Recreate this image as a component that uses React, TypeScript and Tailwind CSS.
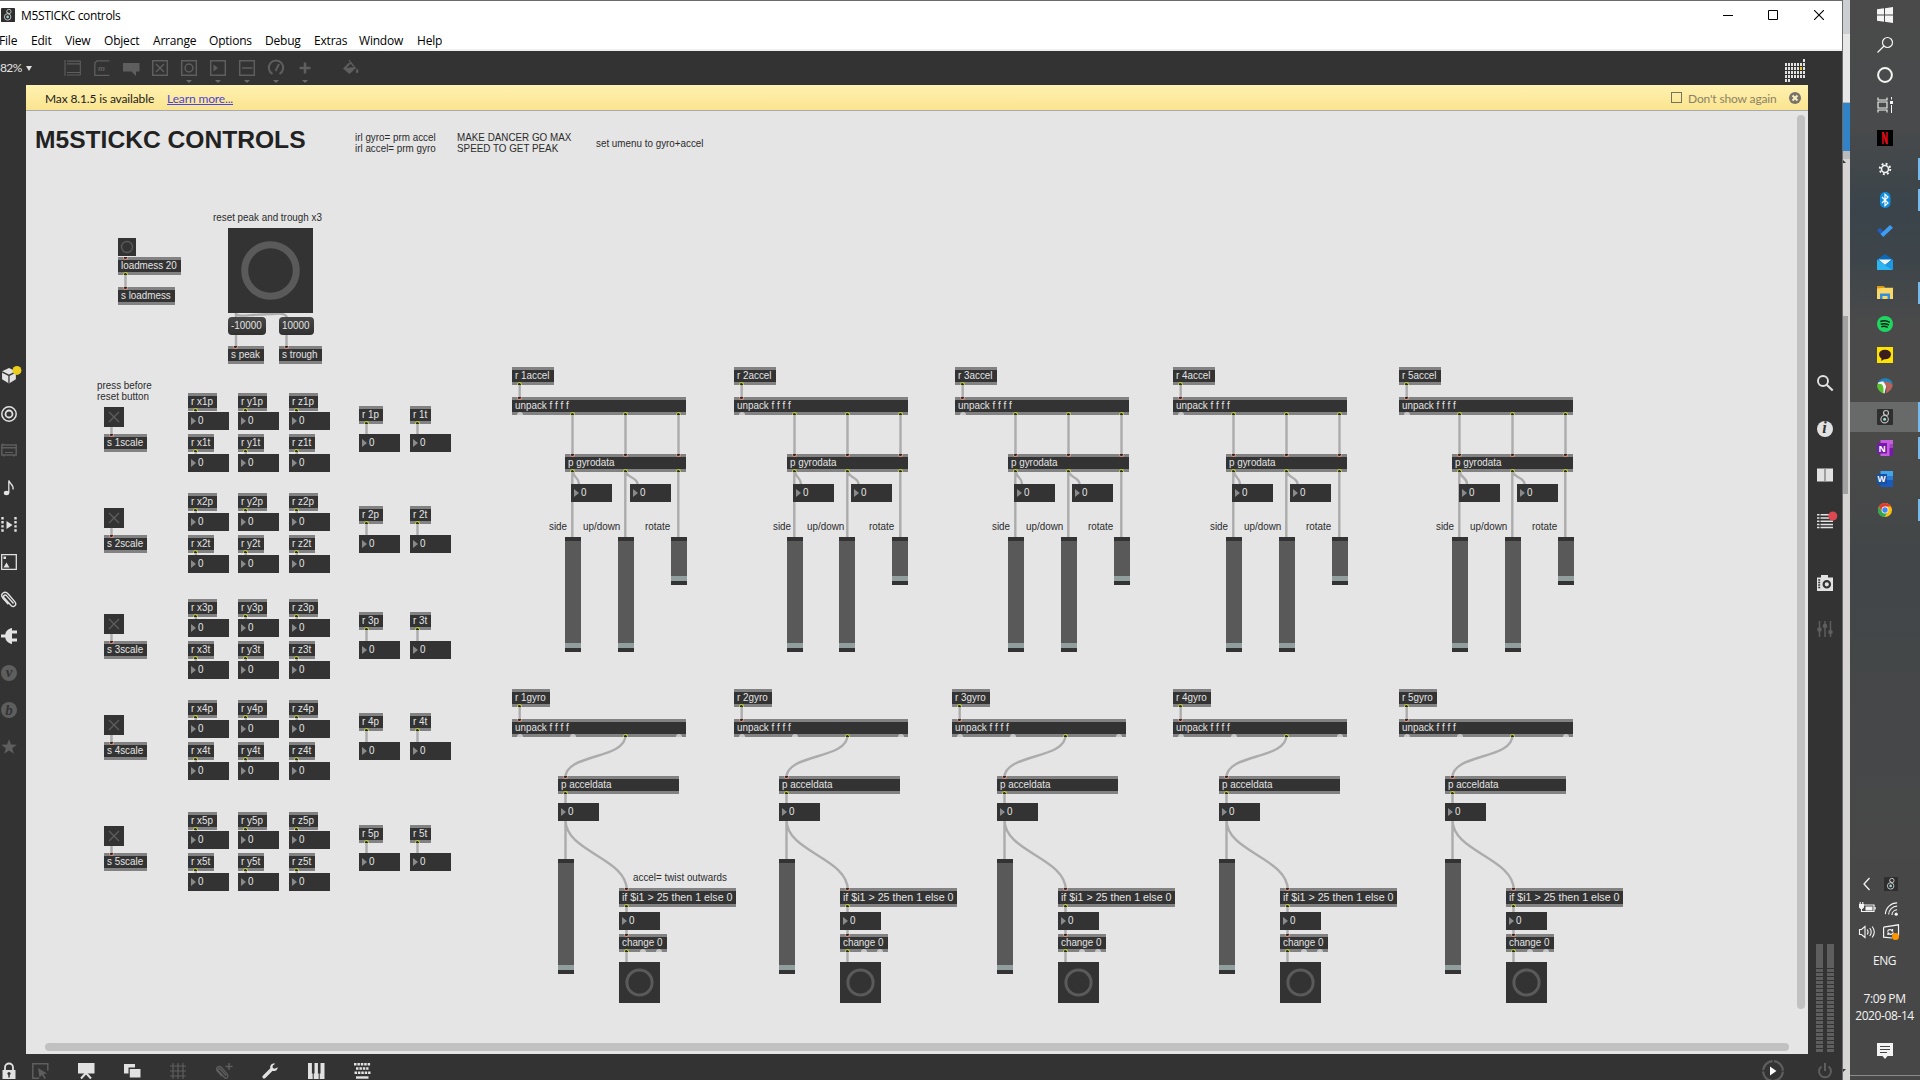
import React from "react";

/* ---------- patcher objects ---------- */

type P = { x: number; y: number };

function Node({ x, y, w, h, className = "", children }: P & { w?: number; h?: number; className?: string; children?: React.ReactNode }) {
  return (
    <div className={"absolute whitespace-nowrap " + className} style={{ left: x, top: y, width: w, height: h }}>
      {children}
    </div>
  );
}

function Inlet({ at }: { at: number }) {
  return <i className="absolute top-0 h-[3px] w-[5px] rounded-b-full border border-t-0 border-[#dd9483] bg-[#2a2a2a]" style={{ left: at - 2.5 }} />;
}

function Outlet({ at, on = true }: { at: number; on?: boolean }) {
  return on ? (
    <i className="absolute bottom-0 h-[3px] w-[5px] rounded-t-full border border-b-0 border-[#bccb3c] bg-[#2a2a2a]" style={{ left: at - 2.5 }} />
  ) : (
    <i className="absolute bottom-0 h-[3px] w-[6px] rounded-t-full bg-[#c8c8c8]" style={{ left: at - 3 }} />
  );
}

function Obj({ x, y, w, t, h = 18, big = false, ins = [], outs = [], off = [] }: P & { w: number; t: string; h?: number; big?: boolean; ins?: number[]; outs?: number[]; off?: number[] }) {
  return (
    <Node x={x} y={y} w={w} h={h} className="border-y-[3px] border-[#828282] bg-[#333333] text-[#e4e4e4]">
      <span className={"absolute left-[3px] origin-left leading-[13px] " + (big ? "top-0 scale-x-[0.969]" : "top-[-1px] scale-x-[0.895]")}>{t}</span>
      <span className="absolute inset-x-0 -top-[3px] -bottom-[3px]">
        {ins.map((a) => <Inlet key={a} at={a} />)}
        {outs.map((a) => <Outlet key={a} at={a} />)}
        {off.map((a) => <Outlet key={"o" + a} at={a} on={false} />)}
      </span>
    </Node>
  );
}

function Num({ x, y }: P) {
  return (
    <Node x={x} y={y} w={41} h={18} className="flex items-center bg-[#333333] pl-[3px] text-[#e4e4e4]">
      <i className="h-0 w-0 border-y-[4.5px] border-l-[5px] border-y-transparent border-l-[#8a8a8a]" />
      <span className="ml-[1.5px] -mt-px origin-left scale-x-[0.895] leading-[13px]">0</span>
    </Node>
  );
}

function Toggle({ x, y }: P) {
  return (
    <Node x={x} y={y} w={20} h={20} className="bg-[#333333]">
      <svg viewBox="0 0 20 20" className="h-5 w-5"><path d="M5 5l10 10M15 5L5 15" stroke="#5e5e5e" strokeWidth="1.3" /></svg>
    </Node>
  );
}

function Bang({ x, y, s, r, k }: P & { s: number; r: number; k: number }) {
  return (
    <Node x={x} y={y} w={s} h={s} className="bg-[#333333]">
      <svg width={s} height={s}><circle cx={s / 2} cy={s / 2} r={r} fill="none" stroke="#5a5a5a" strokeWidth={k} /></svg>
    </Node>
  );
}

function Slider({ x, y, h }: P & { h: number }) {
  return (
    <Node x={x} y={y} w={16} h={h} className="flex flex-col justify-end border-y-4 border-[#333333] bg-[#595959]">
      <div className="h-[5px] bg-[#919e9e]" />
    </Node>
  );
}

function Msg({ x, y, w, t }: P & { w: number; t: string }) {
  return (
    <Node x={x} y={y} w={w} h={18} className="rounded-[4px] bg-linear-to-b from-[#484848] to-[#303030] pl-[3px] leading-[17px] text-[#e4e4e4]">
      <span className="block origin-left scale-x-[0.895]">{t}</span>
    </Node>
  );
}

function Note({ x, y, children }: P & { children: React.ReactNode }) {
  return <Node x={x} y={y} className="origin-left scale-x-[0.895] leading-[11px] text-[#2b2b2b]">{children}</Node>;
}

/* ---------- patch data ---------- */

const scales = [
  { n: 1, tog: 407, p: 393, pn: 412, t: 434, tn: 454, r: 406 },
  { n: 2, tog: 508, p: 493, pn: 513, t: 535, tn: 555, r: 506 },
  { n: 3, tog: 614, p: 599, pn: 619, t: 641, tn: 661, r: 612 },
  { n: 4, tog: 715, p: 700, pn: 720, t: 742, tn: 762, r: 713 },
  { n: 5, tog: 826, p: 812, pn: 831, t: 853, tn: 873, r: 825 },
];
const axes = [{ a: "x", x: 188 }, { a: "y", x: 238 }, { a: "z", x: 289 }];

const accels = [
  { n: 1, x: 512, n1: 571, n2: 630, s: [565, 618, 671], l: 0 },
  { n: 2, x: 734, n1: 793, n2: 851, s: [787, 839, 892], l: 2 },
  { n: 3, x: 955, n1: 1014, n2: 1072, s: [1008, 1061, 1114], l: 0 },
  { n: 4, x: 1173, n1: 1232, n2: 1290, s: [1226, 1279, 1332], l: 0 },
  { n: 5, x: 1399, n1: 1459, n2: 1517, s: [1452, 1505, 1558], l: 0 },
];
const gyros = [
  { n: 1, x: 512, p: 558, f: 619 },
  { n: 2, x: 734, p: 779, f: 840 },
  { n: 3, x: 952, p: 997, f: 1058 },
  { n: 4, x: 1173, p: 1219, f: 1280 },
  { n: 5, x: 1399, p: 1445, f: 1506 },
];

const v = (x: number, a: number, b: number) => `M${x} ${a}V${b}`;
const curve = (x1: number, y1: number, x2: number, y2: number, k: number) =>
  `M${x1} ${y1}C${x1} ${y1 + k} ${x2} ${y2 - k} ${x2} ${y2}`;

const cords: string[] = [
  v(125.5, 273, 289), v(236, 312, 348), v(286.5, 334, 348),
  "M236 313C236 318 250 314.5 262 314.5S286 311 287 318",
  ...scales.flatMap((s) => [
    v(111.5, s.tog + 20, s.t + 2), v(366.5, s.r + 16, s.t), v(417.5, s.r + 16, s.t),
    ...axes.flatMap((a) => [v(a.x + 7.8, s.p + 16, s.pn), v(a.x + 7.8, s.t + 16, s.tn)]),
  ]),
  ...accels.flatMap((c) => [
    v(c.x + 7.7, 383, 399), v(c.x + 60.5, 413, 456), v(c.x + 113.5, 413, 456), v(c.x + 166.5, 413, 456),
    v(c.x + 60.3, 470, 538), v(c.x + 113.3, 470, 538), v(c.x + 166.3, 470, 538),
    curve(c.x + 61, 471, c.n1 + 8, 484, 7), curve(c.x + 114, 471, c.n2 + 7.5, 484, 7),
  ]),
  ...gyros.flatMap((c) => [
    v(c.x + 7.7, 705, 721), curve(c.x + 113.5, 735, c.p + 7.3, 778, 25), v(c.p + 7.5, 792, 860),
    curve(c.p + 7.5, 820, c.f + 7.8, 890, 32),
    v(c.f + 7.5, 905, 936), v(c.f + 7.5, 950, 962),
  ]),
];

function Patch() {
  return (
    <div className="absolute -left-[26px] -top-[111px] h-[1080px] w-[1842px] font-['Liberation_Sans',Arial,sans-serif] text-[11px]">
      <svg className="absolute inset-0" width="1842" height="1080">
        <path d={cords.join("")} fill="none" stroke="#acacac" strokeWidth="2.4" />
      </svg>

      <Node x={35} y={126} className="text-[24.6px] font-bold leading-[28px] text-[#222222]">M5STICKC CONTROLS</Node>
      <Note x={355} y={132}>irl gyro= prm accel<br />irl accel= prm gyro</Note>
      <Note x={457} y={132}>MAKE DANCER GO MAX<br />SPEED TO GET PEAK</Note>
      <Note x={596} y={138}>set umenu to gyro+accel</Note>
      <Note x={213} y={212}>reset peak and trough x3</Note>
      <Note x={97} y={380}>press before<br />reset button</Note>
      <Note x={633} y={872}>accel= twist outwards</Note>

      <Bang x={118} y={238} s={18} r={5.5} k={1.4} />
      <Obj x={118} y={257} w={63} t="loadmess 20" ins={[7.8]} outs={[7.8]} />
      <Obj x={118} y={287} w={57} t="s loadmess" ins={[7.8]} />
      <Bang x={228} y={228} s={85} r={25.8} k={7} />
      <Msg x={228} y={317} w={38} t="-10000" />
      <Msg x={279} y={317} w={35} t="10000" />
      <Obj x={228} y={346} w={36} t="s peak" ins={[7.8]} />
      <Obj x={279} y={346} w={43} t="s trough" ins={[7.8]} />

      {scales.map((s) => (
        <React.Fragment key={s.n}>
          <Toggle x={104} y={s.tog} />
          <Obj x={104} y={s.t} w={43} t={`s ${s.n}scale`} ins={[7.8]} />
          {axes.map((a) => (
            <React.Fragment key={a.a}>
              <Obj x={a.x} y={s.p} w={29} t={`r ${a.a}${s.n}p`} outs={[7.8]} />
              <Num x={a.x} y={s.pn} />
              <Obj x={a.x} y={s.t} w={26} t={`r ${a.a}${s.n}t`} outs={[7.8]} />
              <Num x={a.x} y={s.tn} />
            </React.Fragment>
          ))}
          <Obj x={359} y={s.r} w={24} t={`r ${s.n}p`} outs={[7.8]} />
          <Num x={359} y={s.t} />
          <Obj x={410} y={s.r} w={21} t={`r ${s.n}t`} outs={[7.8]} />
          <Num x={410} y={s.t} />
        </React.Fragment>
      ))}

      {accels.map((c) => (
        <React.Fragment key={c.n}>
          <Obj x={c.x} y={367} w={42} t={`r ${c.n}accel`} outs={[7.8]} />
          <Obj x={c.x} y={397} w={174} t="unpack f f f f" ins={[7.8]} outs={[60.6, 113.5, 166.5]} off={[8]} />
          <Obj x={c.x + 53} y={454} w={121} t="p gyrodata" ins={[7.8, 60.5, 113.5]} outs={[7.8, 60.5, 113.5]} />
          <Num x={c.n1} y={484} />
          <Num x={c.n2} y={484} />
          <Note x={c.x + 37 + c.l} y={521}>side</Note>
          <Note x={c.x + 71 + c.l} y={521}>up/down</Note>
          <Note x={c.x + 133 + c.l} y={521}>rotate</Note>
          <Slider x={c.s[0]} y={537} h={115} />
          <Slider x={c.s[1]} y={537} h={115} />
          <Slider x={c.s[2]} y={537} h={48} />
        </React.Fragment>
      ))}

      {gyros.map((c) => (
        <React.Fragment key={c.n}>
          <Obj x={c.x} y={689} w={38} t={`r ${c.n}gyro`} outs={[7.8]} />
          <Obj x={c.x} y={719} w={174} t="unpack f f f f" ins={[7.8]} outs={[113.5]} off={[8, 61, 166.5]} />
          <Obj x={c.p} y={776} w={121} t="p acceldata" ins={[7.8]} outs={[7.8]} />
          <Num x={c.p} y={803} />
          <Slider x={c.p} y={859} h={115} />
          <Obj x={c.f} y={888} w={117} h={19} big t="if $i1 > 25 then 1 else 0" ins={[7.8]} outs={[7.8]} />
          <Num x={c.f} y={912} />
          <Obj x={c.f} y={934} w={48} t="change 0" ins={[7.8]} outs={[7.8]} off={[24, 40]} />
          <Bang x={c.f} y={962} s={41} r={12.6} k={3} />
        </React.Fragment>
      ))}
    </div>
  );
}

/* ---------- icons ---------- */

function Ico({ children, s = 16, c = "#e2e2e2", className = "" }: { children: React.ReactNode; s?: number; c?: string; className?: string }) {
  return (
    <svg viewBox="0 0 16 16" width={s} height={s} fill="none" stroke={c} strokeWidth="1.5" className={"shrink-0 overflow-visible " + className}>
      {children}
    </svg>
  );
}

const LIT = "#e2e2e2";
const DIM = "#5e5e5e";
const CLIP = "M12.5 12.5L5.5 4.6C4 3 1.6 4.8 3.1 6.7l7.2 8c2.4 2.2 5.8-.8 3.8-3.6L7 2.7C3.8-.7-1.2 2.8 1.6 6.7l5.7 6.5";

function MaxLogo({ s = 16 }: { s?: number }) {
  return (
    <Ico s={s} c="#c4c4c4">
      <rect width="16" height="16" rx="1" fill="#2e2e2e" stroke="none" />
      <circle cx="7.6" cy="10.2" r="3.7" strokeWidth="1.1" />
      <circle cx="9" cy="4" r="2.5" strokeWidth="1.1" />
      <path d="M6.5 4.3L9.8 7" strokeWidth="1" />
      <circle cx="7.6" cy="10.2" r="1.5" fill="#9fd6d6" stroke="none" />
    </Ico>
  );
}

const leftIcons = [
  <Ico key="cube" s={17} c="none">
    <path d="M7.5 0l6.500 3v7.500l-6.500 4-6.500-4V3z" fill={LIT} />
    <path d="M1 3.600L7.500 7 14 3.600M7.500 7v7.500" stroke="#333" strokeWidth="1.200" />
    <circle cx="15" cy="2.300" r="4.200" fill="#ebce1c" />
  </Ico>,
  <Ico key="target"><circle cx="8" cy="8" r="7.200" /><circle cx="8" cy="8" r="3.500" strokeWidth="1.800" /></Ico>,
  <Ico key="box" c={DIM}><path d="M.8 2h14.400v10H.8zM.8 4.800h14.400M3 12v1.500M13 12v1.500M2 .5v1.500" /><path d="M4 9.500h8" strokeWidth="1" /></Ico>,
  <Ico key="note" c={LIT}><ellipse cx="5.500" cy="13" rx="2.700" ry="2.200" fill={LIT} stroke="none" /><path d="M7.800 13V.5C8.500 4 13 4.500 12 9.500" strokeWidth="1.300" /></Ico>,
  <Ico key="film" c={LIT}><path d="M1.500 0v16M14.500 0v16" strokeWidth="2.400" strokeDasharray="2.400 1.700" /><path d="M5.500 4v8l6-4z" fill={LIT} stroke="none" /></Ico>,
  <Ico key="image"><path d="M.7.700h14.600v14.600H.7z" strokeWidth="1.300" /><path d="M2.500 13.500L5.500 8.500l3 5zM2.500 2.500h2.500v2.500h-2.500z" fill={LIT} stroke="none" /></Ico>,
  <Ico key="clip"><path d={CLIP} strokeWidth="1.400" /></Ico>,
  <Ico key="plug" c="none"><path d="M11 0v16C8 15.500 5 13.500 4.200 9.500H0v-3h4.200C5 2.500 8 .5 11 0zM10 2.500h6v3h-6zM10 10.500h6v3h-6z" fill={LIT} /></Ico>,
  <span key="v" className="grid h-4 w-4 place-items-center rounded-full bg-[#5e5e5e] pb-px font-['Liberation_Serif',serif] text-[15px] font-bold italic leading-[14px] text-[#333]">v</span>,
  <span key="b" className="grid h-4 w-4 place-items-center rounded-full bg-[#5e5e5e] font-['Liberation_Serif',serif] text-[15px] font-bold italic leading-[14px] text-[#333]">b</span>,
  <Ico key="star" c="none"><path d="M8 .3l2 5.300 5.700.2-4.500 3.500 1.600 5.500L8 11.600l-4.800 3.200 1.600-5.500L.3 5.800 6 5.600z" fill={DIM} /></Ico>,
];

const frame = <path d="M.7.700h14.600v14.600H.7z" />;
const toolIcons: { i: React.ReactNode; menu?: boolean }[] = [
  { i: <Ico c={DIM}><path d="M0 0v16M15.300 1v14" strokeWidth="1.100" /><path d="M2 1.200h13.500M2 3.800h13.500M2 12.500h13.500M2 15h13.500" strokeWidth="1.200" /></Ico> },
  { i: <Ico c={DIM}><path d="M15.500.8H3L.8 3v12.300h14.700" strokeWidth="1.300" /><text x="4" y="11" fontSize="9" fontStyle="italic" fontWeight="bold" fontFamily="Liberation Serif" fill={DIM} stroke="none">m</text></Ico> },
  { i: <Ico c="none"><path d="M0 3h16.500v8.500H13V16l-4.500-4.500H0z" fill={DIM} /></Ico> },
  { i: <Ico c={DIM}>{frame}<path d="M4 4l8 8M12 4l-8 8" /></Ico> },
  { i: <Ico c={DIM}>{frame}<circle cx="8" cy="8" r="3.900" /></Ico>, menu: true },
  { i: <Ico c={DIM}>{frame}<path d="M3.500 4.500v7L8 8z" fill={DIM} stroke="none" /></Ico>, menu: true },
  { i: <Ico c={DIM}>{frame}<path d="M3 8h10.500" /></Ico>, menu: true },
  { i: <Ico c={DIM}><path d="M4.500 14a7.200 7.200 0 1 1 7 0" strokeWidth="2" /><path d="M7.500 11l3.500-7" strokeWidth="2" /></Ico>, menu: true },
  { i: <Ico c={DIM}><path d="M8 2.500v11M2.500 8h11" strokeWidth="2.600" /></Ico>, menu: true },
];

function GridMark() {
  const cells: [number, number][] = [[6, 0]];
  for (let r = 1; r <= 4; r++) for (let c = 0; c < 7; c++) cells.push([c, r]);
  cells.push([0, 5], [1, 5]);
  return (
    <svg width="21" height="23" className="mr-[36px] mt-[5px]">
      {cells.map(([c, r]) => (
        <rect key={c + "-" + r} x={c * 3} y={r * 4} width="2" height="3" fill={c === 5 && r === 2 ? "#e8c81c" : LIT} />
      ))}
    </svg>
  );
}

const bottomIcons = [
  <Ico key="lock" c={LIT}><path d="M4 8V4.500a4 4 0 0 1 8 0V8" strokeWidth="1.800" /><path d="M1.500 7h13v9h-13z" fill={LIT} stroke="none" /><circle cx="8" cy="10.500" r="1.600" fill="#333" stroke="none" /><path d="M8 11v3.500" stroke="#333" /></Ico>,
  <Ico key="sel" c={DIM}><path d="M7 15.300H.8V.8h15v7" strokeWidth="1.500" /><path d="M6 5l9 5.500-3.500.8L14 15l-1.500 1-2.500-4-2.500 2.500z" fill={DIM} stroke="none" /></Ico>,
  <Ico key="pres" c={LIT}><path d="M0 0h16.500v10.500H0z" fill={LIT} stroke="none" /><path d="M8 10l-5 5.500M8 10l5 5.500" strokeWidth="2" /></Ico>,
  <Ico key="win" c="none"><path d="M0 1h11v3.500H4.500v6H0z" fill={LIT} /><path d="M5.800 6h10.700v8.500H5.800z" fill={LIT} /></Ico>,
  <Ico key="grid" c={DIM}><path d="M3 0v16M8 0v16M13 0v16M0 3h16M0 8h16M0 13h16" strokeWidth="1.200" /></Ico>,
  <Ico key="clip" c={DIM}><g transform="translate(0 2.500) scale(.82)"><path d={CLIP} strokeWidth="1.600" /></g><path d="M13 0v7M9.500 3.500h7" strokeWidth="1.400" /></Ico>,
  <Ico key="wrench" c="none"><path d="M15.500 4.300l-2.700 1.500-2-.9-.2-2.100L13.200.8C10.500-.5 7.500 2 8.300 5.300L.8 12.700c-1.300 2 .8 3.600 2.300 2.500l7.300-7.300c3 .9 5.600-1.200 5.100-3.600z" fill={LIT} /></Ico>,
  <Ico key="piano" c="none"><path d="M0 0h16.500v16H0z" fill={LIT} /><path d="M5.200 0v10.500M11.200 0v10.500" stroke="#333" strokeWidth="2.600" /><path d="M5.200 10v6M11.200 10v6" stroke="#333" strokeWidth="1" /></Ico>,
  <Ico key="keys" c={LIT}><path d="M0 1.200h16.500M.5 9.800h16" strokeWidth="2.400" strokeDasharray="2.500 .9" /><path d="M2 5.500h12.500" strokeWidth="2.400" strokeDasharray="2.500 .9" /><path d="M2 14.500h12.500" strokeWidth="2.400" /></Ico>,
];

const rightIcons: { y: number; i: React.ReactNode }[] = [
  { y: 46, i: <Ico className="mt-px"><circle cx="6" cy="6" r="5" strokeWidth="1.900" /><path d="M9.700 9.700l6 5.800" strokeWidth="2.200" /></Ico> },
  { y: 46, i: <span className="mt-px grid h-4 w-4 place-items-center rounded-full bg-[#e2e2e2] pb-px font-['Liberation_Serif',serif] text-[16px] font-bold italic leading-[14px] text-[#333]">i</span> },
  { y: 46, i: <Ico c="none" className="mt-px"><path d="M0 1.500h16v13H0z" fill={LIT} /><path d="M8 1.500v13" stroke="#8a8a8a" strokeWidth="1.500" /></Ico> },
  { y: 46, i: <Ico c={LIT} className="mt-px"><path d="M0 1.800h2.500M3.500 1.800h9M0 5h2.500M3.500 5H12M0 8.200h2.500M3.500 8.200H16M0 11.400h2.500M3.500 11.400H16M0 14.600h2.500M3.500 14.600H16" strokeWidth="1.500" /><circle cx="15.800" cy="3" r="4.500" fill="#df4850" stroke="none" /></Ico> },
];

/* ---------- Windows taskbar ---------- */

const W = "#f4f4f4";
const startIcons = [
  <Ico key="w" c="none"><path d="M0 2.300l7-1V7.500H0zM8 1.200L16 0v7.500H8zM0 8.500h7v6.200l-7-1zM8 8.500h8V16l-8-1.200z" fill={W} /></Ico>,
  <Ico key="s" c={W}><circle cx="10.500" cy="5.500" r="5" strokeWidth="1.200" /><path d="M7 9L.5 15.500" strokeWidth="1.300" /></Ico>,
  <Ico key="c" c={W}><circle cx="8" cy="8" r="6.900" strokeWidth="2" /></Ico>,
  <Ico key="t" c={W}><path d="M1 .5v2.500h9V.5M1 15.500V13h9v2.500M1 5h9v6H1z" strokeWidth="1.100" /><path d="M14.500 0v2.500M14.500 8v8" strokeWidth="1" /><path d="M13 4h3v3h-3z" fill={W} stroke="none" /></Ico>,
];

const apps: { k: string; i: React.ReactNode; run?: boolean; active?: boolean }[] = [
  { k: "netflix", i: <Ico c="none"><path d="M0 0h16v16H0z" fill="#000" /><path d="M5 2h2v12l-2 .3zM9 2h2v12.300L9 14z" fill="#b00710" /><path d="M5 2h2l4 12.300L9 14z" fill="#e50914" /></Ico> },
  { k: "settings", run: true, i: <Ico c={W} s={14}><circle cx="8" cy="8" r="4" strokeWidth="1.800" /><circle cx="8" cy="8" r="6" strokeWidth="2.200" strokeDasharray="2.200 2.512" /></Ico> },
  { k: "bluetooth", run: true, i: <Ico c="none"><rect x="3" width="10.500" height="16" rx="5" fill="#0f8ee0" /><path d="M5 5l6 6-3 2.700V2.300L11 5l-6 6" stroke="#fff" strokeWidth="1.200" /></Ico> },
  { k: "todo", i: <Ico c="none"><path d="M2.800 4.800L0 7.600l6 6L8.800 10.800z" fill="#1f5fbf" /><path d="M13 2L16 4.800 6.300 14 3.500 11z" fill="#3f9cf0" /></Ico> },
  { k: "mail", i: <Ico c="none"><path d="M0 5.500L8 0l8 5.500V16H0z" fill="#0a68b4" /><path d="M1.500 5.500h13L8 11z" fill="#eef6fb" /><path d="M0 5.500L16 16H0z" fill="#2cb5f0" /><path d="M16 5.500V16L8 10.800z" fill="#1c98e4" /></Ico> },
  { k: "explorer", run: true, i: <Ico c="none"><path d="M0 1h6.500l1.500 1.500V6H0z" fill="#e09a12" /><path d="M0 3.500l8-.8h8V14H0z" fill="#fbd766" /><path d="M3 14V8.500h10V14h-2.500v-3h-5v3z" fill="#2f8fdd" /></Ico> },
  { k: "spotify", i: <Ico c="#10201a"><circle cx="8" cy="8" r="8" fill="#1ed760" stroke="none" /><path d="M3.300 5.500c3-1 6.700-.7 9.500.9M3.700 8.200c2.500-.8 5.700-.5 8.200.8M4.200 10.700c2-.6 4.500-.4 6.500.7" strokeWidth="1.500" /></Ico> },
  { k: "talk", i: <Ico c="none"><path d="M0 0h16v16H0z" fill="#ffe300" /><ellipse cx="8" cy="7.500" rx="6" ry="4.800" fill="#3a1d1d" /><path d="M4.500 10.500L4.300 14l4-2.500z" fill="#3a1d1d" /></Ico> },
  { k: "swirl", i: <Ico c="none"><path d="M1 4.500C3-.5 13-2 15.800 5.500L8 8z" fill="#1d84bd" /><path d="M.6 5C5 2.500 9 3 9.500 7L7.500 15.500 6 15z" fill="#f4f6f4" /><path d="M.3 6.200C5 4.500 7.300 7.500 6.300 15.500 2 13.500-.6 10 .3 6.200z" fill="#5bbf2f" /><path d="M6.500 4c3.500-1 7.500.2 9.200 2.700-.2 3.800-3.200 7-7 8.600C10 11 9.500 7 6.500 4z" fill="#b5655c" /></Ico> },
  { k: "max", run: true, active: true, i: <MaxLogo /> },
  { k: "onenote", run: true, i: <Ico c="none"><path d="M3.500 0H16v16H3.500z" fill="#c55fe0" /><path d="M12.500 4H16v4h-3.500z" fill="#a440c8" /><path d="M12.500 8H16v8h-3.500z" fill="#7719aa" /><path d="M0 3h10v10.500H0z" fill="#7719aa" /><text x="1.600" y="11.600" fontSize="9" fontWeight="bold" fontFamily="Open Sans" fill="#fff">N</text></Ico> },
  { k: "word", i: <Ico c="none"><path d="M3.500 0H16v5H3.500z" fill="#41a5ee" /><path d="M3.500 5H16v4H3.500z" fill="#2b7cd3" /><path d="M3.500 9H16v7H3.500z" fill="#185abd" /><path d="M0 3h10v10.500H0z" fill="#1650a8" /><text x=".6" y="11.300" fontSize="8.500" fontWeight="bold" fontFamily="Open Sans" fill="#fff">W</text></Ico> },
  { k: "chrome", run: true, i: <Ico c="none" s={14}><circle cx="8" cy="8" r="8" fill="#fbc116" /><path d="M1 4a8 8 0 0 1 14 0H8L4.500 10z" fill="#e33b2e" /><path d="M1 4a8 8 0 0 0 6.500 12l3.500-6H4.500z" fill="#2da94f" /><circle cx="8" cy="8" r="3.900" fill="#fff" /><circle cx="8" cy="8" r="3.100" fill="#4285f4" /></Ico> },
];

function Taskbar() {
  return (
    <aside className="flex h-full w-[70px] flex-col bg-[#474747] font-['Open_Sans','Noto_Sans',sans-serif] text-[12px] text-[#f4f4f4]">
      <div className="flex h-[858px] flex-col bg-[linear-gradient(180deg,#4a4a4a_0%,#484a4b_15%,#3a444a_24%,#3d454a_30%,#4a4a4a_38%,#4a4a49_52%,#424648_65%,#484848_100%)]">
        {startIcons.map((i) => <div key={i.key} className="grid h-[30px] place-items-center">{i}</div>)}
        <div className="h-[2px]" />
        {apps.map((a) => (
          <div key={a.k} className={"flex items-center justify-end " + (a.active ? "mt-px h-[30px] bg-[#686a69]" : "h-[31px]")}>
            <div className="grid w-[66px] place-items-center">{a.i}</div>
            <div className={"w-[2px] " + (a.run ? (a.active ? "h-[30px] bg-[#76b9ed]" : "h-[22px] bg-[#76b9ed]") : "")} />
          </div>
        ))}
      </div>
      <div className="mt-[18px] grid grid-cols-2 place-items-center gap-y-[8px] pl-[5px] pr-[17px]">
        <Ico c={W}><path d="M10.500 2L5 8l5.500 6" strokeWidth="1.300" /></Ico>
        <MaxLogo s={14} />
        <Ico c={W}><path d="M5 5h10v6.500H5" strokeWidth="1.200" /><path d="M6.500 6.500h7v4h-7zM15.500 7h1.200v2.500h-1.200zM0 4h5v3.500L3.500 9h-2L0 7.500z" fill={W} stroke="none" /><path d="M1.200 2v2M3.800 2v2M2.500 9v2.500h3" strokeWidth="1.100" /></Ico>
        <Ico c={W} s={15} className="ml-px"><path d="M1.500 14A12.500 12.500 0 0 1 14 2M5 14.500a9 9 0 0 1 9-9M8.500 15A5.800 5.800 0 0 1 14 9.300" strokeWidth="1.200" /><circle cx="13" cy="14" r="1.700" fill={W} stroke="none" /></Ico>
        <Ico c={W}><path d="M.5 5.500h2L6 2.500v11l-3.500-3h-2z" strokeWidth="1.100" /><path d="M8.200 5.500q1.800 2.500 0 5M10.700 4q3 4 0 8M13.200 2.500q4.200 5.500 0 11" strokeWidth="1.100" /></Ico>
        <Ico c={W}><path d="M.6 3.200L15.500.8V12M.6 3.200v10L9 14" strokeWidth="1.200" /><path d="M4.500 7.500c1-2.500 4-2.500 5 0V5M10.500 8.500c-1 2.500-4.500 2.500-5.500 0V11" strokeWidth="1.300" /><circle cx="12.500" cy="12.500" r="3.500" fill="#ff9500" stroke="none" /></Ico>
      </div>
      <div className="mt-[12px] pr-px text-center leading-[18px] tracking-[-0.5px]">ENG</div>
      <div className="mt-[20px] pr-px text-center leading-[17px]"><span className="tracking-[-0.4px]">7:09 PM</span><br /><span className="tracking-[-0.4px]">2020-08-14</span></div>
      <div className="mt-[19px] grid place-items-center">
        <Ico c="none"><path d="M0 0h16v13h-5.500L8 16l-2.500-3H0z" fill={W} /><path d="M3 3.500h10M3 6.500h10M3 9.500h7" stroke="#474747" strokeWidth="1" /></Ico>
      </div>
      <div className="mt-[16px] h-px bg-[#8a8a8a]" />
    </aside>
  );
}

/* ---------- Max window ---------- */

const menu: [string, number][] = [["File", 32], ["Edit", 34], ["View", 39], ["Object", 49], ["Arrange", 56], ["Options", 56], ["Debug", 49], ["Extras", 45], ["Window", 58], ["Help", 40]];

function Meter() {
  return (
    <div className="w-[7px]">
      <div className="h-[24px] bg-[#5e5e5e]" />
      <div className="h-[84px] bg-[repeating-linear-gradient(180deg,#333_0px,#333_1px,#5e5e5e_1px,#5e5e5e_4px)]" />
    </div>
  );
}

export default function App() {
  return (
    <div className="flex h-[1080px] w-[1920px] overflow-hidden bg-[#333333]">
      <div className="flex h-full w-[1843px] flex-col border-r border-t border-[#6b6b6b]">
        <header className="flex h-[50px] flex-col border-b-2 border-[#f0f0f0] bg-white font-['Open_Sans','Noto_Sans',sans-serif] text-[12px] text-black">
          <div className="flex h-[28px] items-center pl-px">
            <MaxLogo s={14} />
            <span className="ml-[6px] mt-[2px] tracking-[-0.35px]">M5STICKC controls</span>
            <div className="ml-auto flex items-center gap-[36px] pr-[18px]">
              <svg width="10" height="10" className="-mr-px"><path d="M0 5.500h10" stroke="#000" /></svg>
              <svg width="10" height="10"><path d="M.5.500h9v9h-9z" stroke="#000" fill="none" /></svg>
              <svg width="10" height="10"><path d="M0 0l10 10M10 0L0 10" stroke="#000" strokeWidth="1.100" /></svg>
            </div>
          </div>
          <nav className="-ml-px flex h-[20px] items-center pt-[3px] tracking-[-0.2px]">
            {menu.map(([m, w]) => <span key={m} className="shrink-0 whitespace-nowrap" style={{ width: w }}>{m}</span>)}
          </nav>
        </header>

        <div className="flex h-[34px] shrink-0 items-center bg-[#333333] font-['Lato',sans-serif] text-[12px] text-[#e2e2e2]">
          <span className="w-[26px] tracking-[-0.6px]">82%</span>
          <i className="h-0 w-0 border-x-[3px] border-t-[5px] border-x-transparent border-t-[#e2e2e2]" />
          <div className="ml-[33px] flex gap-[13px]">
            {toolIcons.map((t, n) => (
              <div key={n} className="relative h-4 w-4">
                {t.i}
                {t.menu && <i className="absolute left-[5px] top-[20px] h-0 w-0 border-x-[3px] border-t-[3px] border-x-transparent border-t-[#6a6a6a]" />}
              </div>
            ))}
          </div>
          <Ico c={DIM} className="ml-[30px]"><path d="M6 2.500L13 8l-6.500 6L0 8.500z" fill={DIM} stroke="none" /><path d="M3 8L8 2.800 12 7z" fill="#333" stroke="none" /><path d="M2 8.500L8 2.500l4.500 5.500M6 0l4 6" strokeWidth="1.100" /><path d="M14 8q2.500 3.500.8 5-2 .5-2-1.500z" fill={DIM} stroke="none" /></Ico>
          <div className="ml-auto"><GridMark /></div>
        </div>

        <div className="flex h-[969px] shrink-0 bg-[#333333]">
          <div className="flex w-[26px] flex-col pt-[273px]">
            {leftIcons.map((i) => <div key={i.key} className="grid h-[37px] w-[18px] place-items-center">{i}</div>)}
          </div>

          <main className="flex w-[1782px] flex-col bg-[#e5e5e5]">
            <div className="flex h-[26px] shrink-0 items-center border-b border-[#a9aab0] bg-linear-to-b from-[#fff1b0] to-[#fae48f] pl-[19px] pr-[7px] font-['Lato',sans-serif] text-[12px] tracking-[-0.14px] text-[#1c1c1c]">
              <span className="mt-[2px]">Max 8.1.5 is available</span>
              <span className="ml-[13px] mt-[2px] text-[#4a44d8] underline">Learn more...</span>
              <span className="ml-auto h-[11px] w-[11px] border border-[#77725a]" />
              <span className="ml-[6px] mt-[2px] w-[101px] text-[#8b8265]">Don't show again</span>
              <svg width="12" height="12"><circle cx="6" cy="6" r="6" fill="#77736b" /><path d="M3.500 3.500l5 5M8.500 3.500l-5 5" stroke="#fdf0c0" strokeWidth="2" /></svg>
            </div>
            <div className="relative grow overflow-hidden">
              <Patch />
              <div className="absolute right-[3px] top-[4px] h-[894px] w-[8px] rounded-full bg-[#c1c1c1]" />
              <div className="absolute bottom-[3px] left-[19px] h-[8px] w-[1744px] rounded-full bg-[#c1c1c1]" />
            </div>
          </main>

          <div className="flex w-[34px] flex-col items-center pr-px pt-[274px]">
            {rightIcons.map((r, n) => <div key={n} className="grid shrink-0 place-items-center" style={{ height: r.y }}>{r.i}</div>)}
            <div className="mt-[17px] grid h-[46px] shrink-0 place-items-center">
              <Ico c="none"><path d="M4 0h7v2.500h5V16H0V2.500h4z" fill={LIT} /><path d="M1.200 5h2M1.200 7.500h2M1.200 10h2M1.200 12.500h2" stroke="#333" /><circle cx="9.800" cy="9.300" r="3.200" stroke="#333" strokeWidth="2.200" /></Ico>
            </div>
            <div className="grid h-[46px] shrink-0 place-items-center">
              <Ico c={DIM}><path d="M2.500 0v16M8 0v16M13.500 0v16" /><circle cx="2.500" cy="8.500" r="2.300" fill={DIM} stroke="none" /><circle cx="8" cy="5" r="2.300" fill={DIM} stroke="none" /><circle cx="13.500" cy="11" r="2.300" fill={DIM} stroke="none" /></Ico>
            </div>
            <div className="mb-[2px] mt-auto flex gap-[4px]"><Meter /><Meter /></div>
          </div>
        </div>

        <footer className="flex h-[26px] shrink-0 items-center bg-[#333333] pl-px pt-[8px]">
          <div className="w-[31px]">{bottomIcons[0]}</div>
          {bottomIcons.slice(1).map((i) => <div key={i.key} className="w-[46px]">{i}</div>)}
          <Ico s={22} c={DIM} className="ml-auto mr-[33px]"><circle cx="8" cy="8" r="7.200" strokeWidth="1.600" strokeDasharray="10.300 1.010" strokeDashoffset="-.5" /><path d="M5.800 4.800v6.400L10.500 8z" fill="#fff" stroke="none" /></Ico>
          <Ico c={DIM} className="mr-[9px]"><path d="M4.500 3.500a6 6 0 1 0 7 0M8 0v8" strokeWidth="2" /></Ico>
        </footer>
      </div>

      <div className="flex w-[7px] flex-col bg-[#d6d5d4]">
        <div className="h-[34px] bg-[#cccfd2]" />
        <div className="h-[69px] border-b border-[#b8b8b8] bg-[#e7e7e7]" />
        <div className="h-[48px] bg-[#3183c8]" />
        <div className="h-[8px] bg-[#b9bbbd]" />
        <i className="mt-px h-0 w-0 border-r-[3px] border-b-[3px] border-r-transparent border-b-[#333]" />
        <div className="mt-[153px] h-[178px] w-[5px] bg-[#a3a2a2]" />
        <i className="mt-[575px] h-0 w-0 border-r-[3px] border-t-[3px] border-r-transparent border-t-[#333]" />
      </div>

      <Taskbar />
    </div>
  );
}
